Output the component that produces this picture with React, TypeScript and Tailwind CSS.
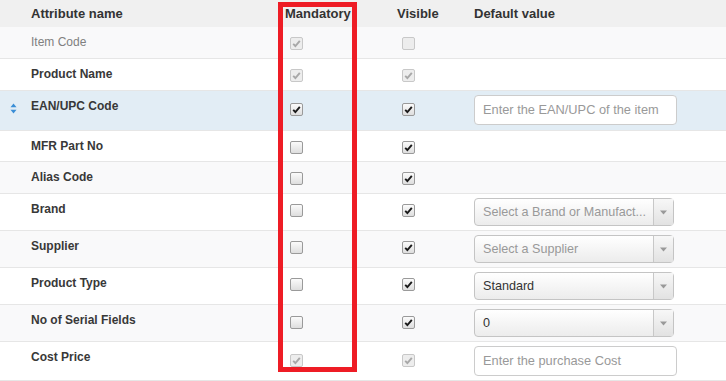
import React from "react";

type Row = {
  name: string;
  h: string;
  bg: string;
  mandatory: boolean;
  mandatoryDisabled?: boolean;
  visible: boolean;
  visibleDisabled?: boolean;
  muted?: boolean;
  sortable?: boolean;
  boxTop: string;
  field?: { kind: "input" | "select"; text: string; placeholder?: boolean };
};

const rows: Row[] = [
  { name: "Item Code", h: "h-[32px]", bg: "bg-[#f9f9fa]", mandatory: true, mandatoryDisabled: true, visible: false, visibleDisabled: true, muted: true, boxTop: "pt-[10px]" },
  { name: "Product Name", h: "h-[32px]", bg: "bg-white", mandatory: true, mandatoryDisabled: true, visible: true, visibleDisabled: true, boxTop: "pt-[10px]" },
  { name: "EAN/UPC Code", h: "h-[40px]", bg: "bg-[#e2edf5]", mandatory: true, visible: true, sortable: true, boxTop: "pt-[12px]", field: { kind: "input", text: "Enter the EAN/UPC of the item", placeholder: true } },
  { name: "MFR Part No", h: "h-[31px]", bg: "bg-white", mandatory: false, visible: true, boxTop: "pt-[10px]" },
  { name: "Alias Code", h: "h-[32px]", bg: "bg-[#f9f9fa]", mandatory: false, visible: true, boxTop: "pt-[10px]" },
  { name: "Brand", h: "h-[37px]", bg: "bg-white", mandatory: false, visible: true, boxTop: "pt-[10px]", field: { kind: "select", text: "Select a Brand or Manufact...", placeholder: true } },
  { name: "Supplier", h: "h-[37px]", bg: "bg-[#f9f9fa]", mandatory: false, visible: true, boxTop: "pt-[10px]", field: { kind: "select", text: "Select a Supplier", placeholder: true } },
  { name: "Product Type", h: "h-[37px]", bg: "bg-white", mandatory: false, visible: true, boxTop: "pt-[10px]", field: { kind: "select", text: "Standard" } },
  { name: "No of Serial Fields", h: "h-[37px]", bg: "bg-[#f9f9fa]", mandatory: false, visible: true, boxTop: "pt-[11px]", field: { kind: "select", text: "0" } },
  { name: "Cost Price", h: "h-[39px]", bg: "bg-white", mandatory: true, mandatoryDisabled: true, visible: true, visibleDisabled: true, boxTop: "pt-[12px]", field: { kind: "input", text: "Enter the purchase Cost", placeholder: true } },
];

const CheckBox = ({ checked, disabled }: { checked: boolean; disabled?: boolean }) => (
  <span
    className={`flex w-[13px] h-[13px] items-center justify-center rounded-[2px] border ${
      disabled
        ? "border-[#c8c8c8] bg-[#ededed]"
        : "border-[#9a9a9a] bg-gradient-to-b from-[#fbfbfb] to-[#dedede]"
    }`}
  >
    {checked && (
      <svg width="9" height="9" viewBox="0 0 9 9">
        <path
          d="M1.2 4.8 L3.4 7 L7.8 1.8"
          fill="none"
          stroke={disabled ? "#a8a8a8" : "#1a1a1a"}
          strokeWidth="1.9"
        />
      </svg>
    )}
  </span>
);

const SortIcon = () => (
  <svg width="7" height="11" viewBox="0 0 7 11" className="mt-[3px]">
    <path d="M3.5 0.5 L6.5 4.3 L0.5 4.3 Z" fill="#3a8ed6" />
    <path d="M0.5 6.7 L6.5 6.7 L3.5 10.5 Z" fill="#3a8ed6" />
  </svg>
);

const Field = ({ kind, text, placeholder }: { kind: "input" | "select"; text: string; placeholder?: boolean }) =>
  kind === "input" ? (
    <div className="flex h-[30px] w-[203px] items-center rounded-[4px] border border-[#cccccc] bg-white pl-[8px] text-[12.8px] text-[#999]">
      {text}
    </div>
  ) : (
    <div className="flex h-[28px] w-[200px] rounded-[4px] border border-[#c4c4c4] bg-gradient-to-b from-white to-[#ececec]">
      <span className={`flex flex-1 items-center pl-[8px] text-[12.6px] ${placeholder ? "text-[#999]" : "text-[#333]"}`}>
        {text}
      </span>
      <span className="flex w-[20px] items-center justify-center border-l border-[#c8c8c8] bg-gradient-to-b from-[#f7f7f7] to-[#e2e2e2]">
        <svg width="7" height="5" viewBox="0 0 7 5">
          <path d="M0 0.5 L7 0.5 L3.5 4.5 Z" fill="#999" />
        </svg>
      </span>
    </div>
  );

export default function App() {
  return (
    <div className="relative h-[381px] w-[726px] overflow-hidden bg-white font-['Liberation_Sans',Arial,sans-serif]">
      <div className="grid h-[27px] grid-cols-[31px_254px_112px_77px_1fr] items-center bg-[#f0f0f0] text-[13px] font-bold text-[#333]">
        <span />
        <span>Attribute name</span>
        <span>Mandatory</span>
        <span>Visible</span>
        <span>Default value</span>
      </div>

      {rows.map((row) => (
        <div
          key={row.name}
          className={`grid grid-cols-[31px_254px_112px_77px_1fr] items-start border-b border-[#e6e6e6] ${row.h} ${row.bg}`}
        >
          <div className="flex pl-[10px] pt-[9px]">{row.sortable && <SortIcon />}</div>
          <div
            className={`pt-[8px] text-[12px] leading-[14px] ${
              row.muted ? "text-[#808080]" : "font-bold text-[#383838]"
            }`}
          >
            {row.name}
          </div>
          <div className={`pl-[5px] ${row.boxTop}`}>
            <CheckBox checked={row.mandatory} disabled={row.mandatoryDisabled} />
          </div>
          <div className={`pl-[5px] ${row.boxTop}`}>
            <CheckBox checked={row.visible} disabled={row.visibleDisabled} />
          </div>
          <div className="pt-[4px]">{row.field && <Field {...row.field} />}</div>
        </div>
      ))}

      <div className="pointer-events-none absolute left-[278px] top-[2px] h-[370px] w-[79px] border-[5px] border-[#ee1c25]" />
    </div>
  );
}
